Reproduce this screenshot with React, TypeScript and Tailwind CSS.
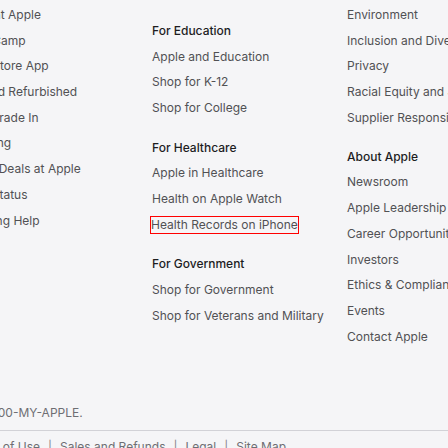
import React from 'react'

type Section = { title?: string; links: string[] }

const columns: { width: string; top: string; gap: string; sections: Section[] }[] = [
  {
    width: 'w-[196px]',
    top: 'pt-[7px]',
    gap: 'gap-[23.5px]',
    sections: [
      {
        links: [
          'Today at Apple',
          'Apple Camp',
          'Apple Store App',
          'Certified Refurbished',
          'Apple Trade In',
          'Financing',
          'Carrier Deals at Apple',
          'Order Status',
          'Shopping Help',
        ],
      },
    ],
  },
  {
    width: 'w-[195px]',
    top: 'pt-[23px]',
    gap: 'gap-[23.5px]',
    sections: [
      { title: 'For Education', links: ['Apple and Education', 'Shop for K-12', 'Shop for College'] },
      { title: 'For Healthcare', links: ['Apple in Healthcare', 'Health on Apple Watch', 'Health Records on iPhone'] },
      { title: 'For Government', links: ['Shop for Government', 'Shop for Veterans and Military'] },
    ],
  },
  {
    width: 'w-[195px]',
    top: 'pt-[7px]',
    gap: 'gap-[23px]',
    sections: [
      {
        links: ['Environment', 'Inclusion and Diversity', 'Privacy', 'Racial Equity and Justice', 'Supplier Responsibility'],
      },
      {
        title: 'About Apple',
        links: [
          'Newsroom',
          'Apple Leadership',
          'Career Opportunities',
          'Investors',
          'Ethics & Compliance',
          'Events',
          'Contact Apple',
        ],
      },
    ],
  },
]

const FooterColumn: React.FC<{ width: string; top: string; gap: string; sections: Section[] }> = ({
  width,
  top,
  gap,
  sections,
}) => (
  <div className={`${width} shrink-0 ${top} flex flex-col ${gap}`}>
    {sections.map((s, i) => (
      <div key={i} className="flex flex-col gap-[9.7px]">
        {s.title && <h3 className="text-[12px] leading-[16px] font-medium text-[#1d1d1f]">{s.title}</h3>}
        {s.links.map((l) => (
          <a
            key={l}
            className={`text-[12px] leading-[16px] font-normal text-[#515154] whitespace-nowrap self-start ${
              l === 'Health Records on iPhone' ? 'outline outline-1 outline-[#ff0000] -ml-px' : ''
            }`}
          >
            {l}
          </a>
        ))}
      </div>
    ))}
  </div>
)

export default function App() {
  return (
    <div
      className="relative w-[448px] h-[448px] overflow-hidden bg-[#f5f5f7]"
      style={{ fontFamily: 'Inter, Roboto, "Liberation Sans", sans-serif' }}
    >
      <div className="flex -ml-[44px]">
        {columns.map((c, i) => (
          <FooterColumn key={i} width={c.width} top={c.top} gap={c.gap} sections={c.sections} />
        ))}
      </div>
      <div className="absolute top-[405px] left-0 w-[448px] overflow-hidden">
        <p className="-ml-[60px] text-[12px] leading-[16px] text-[#6e6e73] whitespace-nowrap">Or call 1-800-MY-APPLE.</p>
        <div className="mt-[9px] border-t border-[#d2d2d7]" />
        <p className="mt-[8px] -ml-[36px] text-[12px] leading-[16px] text-[#6e6e73] whitespace-nowrap">
          Terms of Use<span className="mx-[8px] text-[#86868b]">|</span>Sales and Refunds
          <span className="mx-[8px] text-[#86868b]">|</span>Legal<span className="mx-[8px] text-[#86868b]">|</span>Site Map
        </p>
      </div>
    </div>
  )
}
